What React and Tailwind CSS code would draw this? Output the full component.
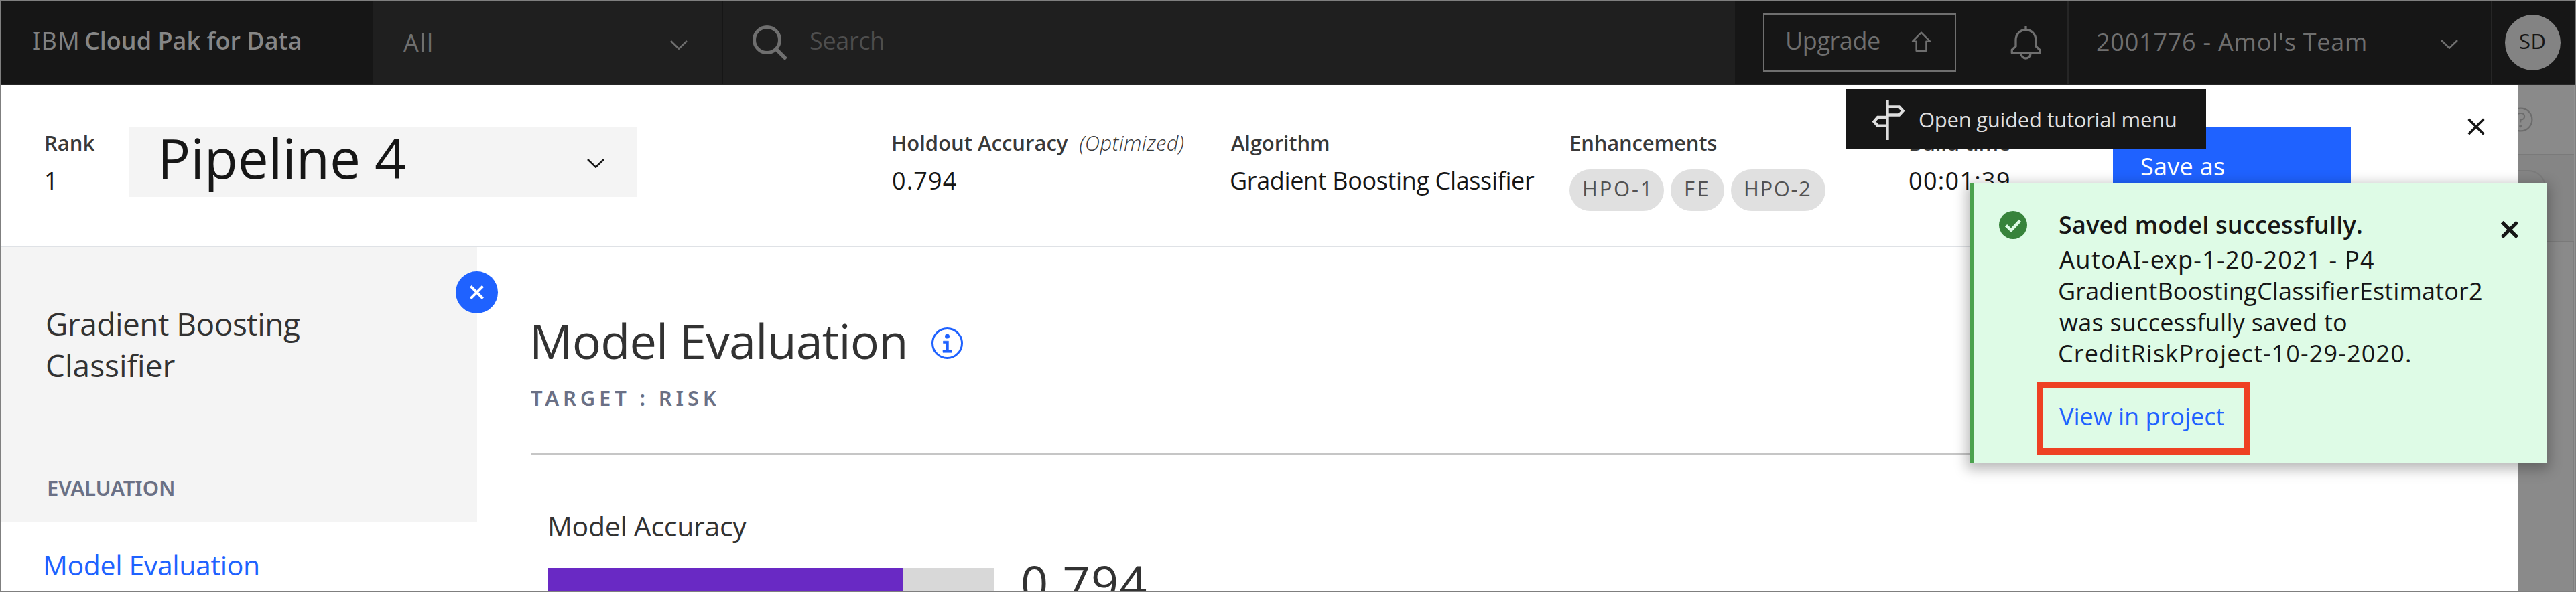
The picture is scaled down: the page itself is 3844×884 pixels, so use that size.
function Chevron({ className }) {
  return (
    <svg className={className} width="26" height="14" viewBox="0 0 26 14" fill="none" stroke="currentColor" strokeWidth="2.6">
      <path d="M1 1l12 11.6L25 1" />
    </svg>
  );
}

function Cross({ className, thickness }) {
  return (
    <svg className={className} viewBox="0 0 26 26" fill="none" stroke="currentColor" strokeWidth={thickness}>
      <path d="M1.7 1.7l22.6 22.6M24.3 1.7L1.7 24.3" />
    </svg>
  );
}

function TopBar() {
  return (
    <header className="flex h-[125px] w-full items-start border-b-2 border-[#262626] bg-[#161616] text-[36px] leading-[48px] text-[#6f6f6f]">
      <div className="flex h-full w-[555px] shrink-0 whitespace-nowrap pt-[35px] pl-[46px]">
        <span className="w-[78px] font-['Noto_Sans',sans-serif] tracking-[1.2px] text-[#808080]">IBM</span>
        <span className="font-semibold text-[#868686]">Cloud Pak for Data</span>
      </div>
      <div className="flex h-full w-[522px] shrink-0 border-r-2 border-[#161616] bg-[#1f1f1f] pl-[45px]">
        <span className="w-[398px] pt-[38px] tracking-[1.6px]">All</span>
        <Chevron className="mt-[58px]" />
      </div>
      <div className="flex h-full w-[1510px] shrink-0 bg-[#1f1f1f] pl-[44px]">
        <svg className="mt-[36px]" width="52" height="52" viewBox="0 0 52 52" fill="none" stroke="currentColor">
          <circle cx="21.5" cy="21.5" r="19" strokeWidth="5" />
          <path d="M35 35l15 15" strokeWidth="5.4" />
        </svg>
        <span className="ml-[33px] pt-[35px] tracking-[-0.36px] text-[#4e4e4e]">Search</span>
      </div>
      <div className="mt-[18px] ml-[42px] flex h-[87px] w-[288px] shrink-0 border-2 border-[#6f6f6f] pl-[31px]">
        <span className="w-[188px] pt-[15px] tracking-[-0.43px]">Upgrade</span>
        <svg className="mt-[25px]" width="30" height="30" viewBox="0 0 30 30" fill="none" stroke="currentColor" strokeWidth="2.4" strokeLinejoin="round">
          <path d="M15 1.6L28 14.6H22.4V28.8H7.6V14.6H2z" />
        </svg>
      </div>
      <svg className="mt-[37px] ml-[81px] shrink-0" width="46" height="51" viewBox="0 0 46 51" fill="none" stroke="currentColor" strokeWidth="3.3">
        <path d="M23 0v6" />
        <path d="M8 20.5a15 15 0 0 1 30 0V30l5.7 5.3V40H2.3v-4.7L8 30z" strokeLinejoin="round" />
        <path d="M16 41a7 7 0 0 0 14 0" />
      </svg>
      <div className="ml-[39px] flex h-full w-[634px] shrink-0 border-x-2 border-[#262626] pl-[41px]">
        <span className="w-[514px] whitespace-nowrap pt-[37px] tracking-[0.77px]">2001776 - Amol's Team</span>
        <Chevron className="mt-[57px]" />
      </div>
      <div className="mt-[20px] ml-[19px] h-[83px] w-[83px] shrink-0 rounded-full bg-[#838383] pt-[19px] pl-[21px] text-[31px] leading-[40px] tracking-[0.5px] text-[#161616]">
        SD
      </div>
    </header>
  );
}

function Stat({ label, value, className }) {
  return (
    <div className={"flex shrink-0 flex-col whitespace-nowrap pt-[66px] " + className}>
      <div className="text-[31px] leading-[40px] font-semibold text-[#393939]">{label}</div>
      <div className="mt-[13px] text-[36px] leading-[48px] text-[#161616]">{value}</div>
    </div>
  );
}

function PipelineBar() {
  return (
    <div className="flex h-[242px] shrink-0 items-start border-b-2 border-[#dfe2e6] pl-[64px]">
      <Stat className="w-[127px]" label="Rank" value="1" />
      <div className="mt-[63px] flex h-[104px] w-[758px] shrink-0 bg-[#f4f4f4] pl-[42px] text-[#161616]">
        <span className="w-[641px] text-[82px] leading-[90px] tracking-[-0.14px]">Pipeline 4</span>
        <Chevron className="mt-[47px]" />
      </div>
      <Stat
        className="ml-[379px] w-[505px]"
        label={
          <>
            <span>Holdout Accuracy</span>
            <span className="ml-[17px] font-light italic tracking-[0.33px]">(Optimized)</span>
          </>
        }
        value={<span className="pl-[1px] tracking-[1.12px]">0.794</span>}
      />
      <Stat
        className="w-[507px]"
        label={<span className="pl-[2px] tracking-[-0.15px]">Algorithm</span>}
        value={<span className="tracking-[-0.36px]">Gradient Boosting Classifier</span>}
      />
      <div className="flex w-[506px] shrink-0 flex-col pt-[66px] text-[31px] leading-[40px]">
        <div className="font-semibold tracking-[-0.15px] text-[#393939]">Enhancements</div>
        <div className="mt-[20px] flex gap-[10px] text-[#525252]">
          <span className="h-[62px] w-[141px] rounded-full bg-[#e0e0e0] pt-[8px] pl-[19px] tracking-[2.8px]">HPO-1</span>
          <span className="h-[62px] w-[80px] rounded-full bg-[#e0e0e0] pt-[8px] pl-[20px] tracking-[3.6px]">FE</span>
          <span className="h-[62px] w-[141px] rounded-full bg-[#e0e0e0] pt-[8px] pl-[19px] tracking-[1.6px]">HPO-2</span>
        </div>
      </div>
      <Stat
        className="w-[305px]"
        label={<span className="tracking-[-0.14px]">Build time</span>}
        value={<span className="tracking-[1.3px]">00:01:39</span>}
      />
      <button className="mt-[63px] flex h-[125px] w-[355px] shrink-0 bg-[#1f62ff] pt-[35px] pl-[41px] text-[36px] leading-[48px] tracking-[0.28px] text-white">
        Save as
      </button>
      <Cross className="mt-[49px] ml-[174px] h-[26px] w-[26px] shrink-0 text-[#161616]" thickness="3.6" />
    </div>
  );
}

function Sidebar() {
  return (
    <aside className="relative flex w-[710px] shrink-0 flex-col">
      <div className="h-[411px] shrink-0 bg-[#f4f4f4] pt-[83px] pl-[66px]">
        <div className="text-[46px] leading-[62px] text-[#323232]">
          <div className="tracking-[-0.51px]">Gradient Boosting</div>
          <div>Classifier</div>
        </div>
        <div className="mt-[132px] pl-[2px] font-['Noto_Sans',sans-serif] text-[31px] leading-[40px] font-semibold tracking-[-0.12px] text-[#6a7085]">
          EVALUATION
        </div>
      </div>
      <a className="mt-[35px] pl-[62px] text-[41px] leading-[56px] tracking-[-0.37px] text-[#1f62ff]">Model Evaluation</a>
      <div className="absolute top-[36px] right-[-31px] flex h-[63px] w-[63px] items-center justify-center rounded-full bg-[#1f62ff] text-white">
        <Cross className="h-[21px] w-[21px]" thickness="5" />
      </div>
    </aside>
  );
}

function Evaluation() {
  return (
    <section className="flex flex-1 flex-col pl-[78px] text-[#323232]">
      <div className="mt-[91px] flex items-start">
        <h1 className="w-[600px] text-[72px] leading-[96px] whitespace-nowrap tracking-[-0.91px]">Model Evaluation</h1>
        <svg className="mt-[29px] text-[#1f62ff]" width="47" height="47" viewBox="0 0 47 47" fill="none">
          <circle cx="23.5" cy="23.5" r="22" stroke="currentColor" strokeWidth="3" />
          <circle cx="23.5" cy="13.2" r="3.4" fill="currentColor" />
          <path d="M17.5 20.2H25.4V34H30V37.2H17V34H21.6V23.4H17.5z" fill="currentColor" stroke="currentColor" strokeWidth=".6" />
        </svg>
      </div>
      <div className="mt-[18px] pl-[2px] font-['Noto_Sans',sans-serif] text-[31px] leading-[40px] font-semibold tracking-[5.83px] text-[#6a7085]">
        TARGET : RISK
      </div>
      <div className="mt-[63px] mr-[80px] ml-[2px] h-[2px] shrink-0 bg-[#c6c6c6]" />
      <h2 className="mt-[78px] pl-[27px] text-[41px] leading-[56px] tracking-[-0.3px]">Model Accuracy</h2>
      <div className="mt-[8px] flex items-start pl-[28px]">
        <div className="mt-[27px] flex h-[52px] w-[666px] shrink-0 bg-[#d8d8d8]">
          <div className="h-full w-[79.4%] bg-[#6929c4]" />
        </div>
        <span className="ml-[39px] text-[72px] leading-[96px] tracking-[1.22px]">0.794</span>
      </div>
    </section>
  );
}

function Backdrop() {
  return (
    <div className="flex w-[84px] shrink-0 flex-col overflow-hidden border-r border-[#929292] bg-[#8a8a8a]">
      <div className="h-[105px] shrink-0 border-b-2 border-[#7a7a7a] pt-[33px]">
        <svg className="ml-[-15px]" width="37" height="37" viewBox="0 0 37 37" fill="none" stroke="#6c6c6c" strokeWidth="2.2">
          <circle cx="18.5" cy="18.5" r="16.9" />
          <path d="M12.6 15.4v-1.6a4.8 4.8 0 0 1 4.8-4.8h2a4.7 4.7 0 0 1 0 9.4h-1.2v4" />
          <circle cx="18.3" cy="28.2" r="1" fill="#6c6c6c" />
        </svg>
      </div>
      <div className="h-[130px] shrink-0 border-b-2 border-[#7a7a7a] bg-[#858585] pt-[22px]">
        <div className="h-[80px] w-[41px] rounded-r-[26px] border-y-2 border-r-2 border-[#7b7b7b]" />
      </div>
      <div className="flex-1 border-r-2 border-[#7e7e7e]" />
    </div>
  );
}

function TutorialTip() {
  return (
    <div className="absolute top-[131px] left-[2752px] flex h-[89px] w-[538px] items-start bg-[#161616] pl-[39px] text-[#dedede]">
      <svg className="mt-[15px] shrink-0" width="50" height="62" viewBox="0 0 50 62" fill="none" stroke="currentColor" strokeWidth="4.4">
        <path d="M23.5 1v60" />
        <path d="M23.5 11.5H41l5.5 6-5.5 6H23.5M23.5 27H9l-5.5 6.4L9 39.8h14.5" />
      </svg>
      <span className="ml-[20px] pt-[25px] text-[31px] leading-[40px] whitespace-nowrap tracking-[-0.26px]">
        Open guided tutorial menu
      </span>
    </div>
  );
}

function Toast() {
  return (
    <div className="absolute top-[271px] left-[2937px] flex h-[418px] w-[861px] items-start border-l-[7px] border-[#4aa24d] bg-[#defbe6] pl-[37px] text-[36px] text-[#161616] shadow-[0_6px_18px_4px_rgba(0,0,0,0.28)]">
      <svg className="mt-[42px] shrink-0" width="42" height="42" viewBox="0 0 42 42" fill="none">
        <circle cx="21" cy="21" r="21" fill="#37833b" />
        <path d="M10.5 21.6l7.6 7.2L31.4 14.4" stroke="#defbe6" strokeWidth="4.6" />
      </svg>
      <div className="ml-[46px] flex w-[661px] shrink-0 flex-col pt-[39px] whitespace-nowrap">
        <div className="pl-[1px] leading-[48px] font-semibold tracking-[0.23px]">Saved model successfully.</div>
        <div className="mt-[5px] leading-[46.8px]">
          <div className="pl-[2px] font-['Noto_Sans',sans-serif] tracking-[1.27px]">AutoAI-exp-1-20-2021 - P4</div>
          <div className="tracking-[0.16px]">GradientBoostingClassifierEstimator2</div>
          <div className="pl-[2px] tracking-[0.25px]">was successfully saved to</div>
          <div className="tracking-[1.15px]">CreditRiskProject-10-29-2020.</div>
        </div>
        <div className="mt-[18px] ml-[-32px] h-[109px] w-[319px] border-[10px] border-[#ee4023] pt-[18px] pl-[24px] leading-[48px] text-[#1f62ff]">
          View in project
        </div>
      </div>
      <Cross className="mt-[57px] h-[26px] w-[26px] shrink-0" thickness="5.2" />
    </div>
  );
}

export default function App() {
  return (
    <div className="relative h-[884px] w-[3844px] overflow-hidden border-2 border-[#7f7f7f] bg-white font-['Open_Sans','Noto_Sans',sans-serif]">
      <TopBar />
      <div className="flex h-[755px]">
        <main className="flex w-[3756px] shrink-0 flex-col overflow-hidden bg-white">
          <PipelineBar />
          <div className="flex min-h-0 flex-1">
            <Sidebar />
            <Evaluation />
          </div>
        </main>
        <Backdrop />
      </div>
      <TutorialTip />
      <Toast />
    </div>
  );
}
